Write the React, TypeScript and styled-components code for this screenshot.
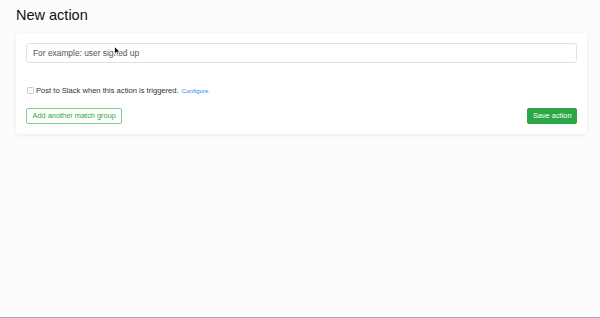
import styled, { createGlobalStyle } from "styled-components";

const GlobalStyle = createGlobalStyle`
  html, body {
    margin: 0;
    padding: 0;
    background: #fcfcfc;
  }
  body {
    font-family: "Liberation Sans", Arial, sans-serif;
    color: #222;
  }
`;

const Page = styled.div`
  position: relative;
  height: 317px;
  padding: 0 13px 0 16px;
  border-bottom: 1px solid #a8a8a8;
  background: #fcfcfc;
`;

const Title = styled.h1`
  margin: 0 0 9px;
  padding-top: 7px;
  font-size: 14.5px;
  line-height: 17px;
  font-weight: 400;
  color: #111;
`;

const Card = styled.div`
  width: 551px;
  padding: 10px;
  background: #fff;
  border-radius: 3px;
  box-shadow: 0 1px 4px rgba(0, 0, 0, 0.08);
`;

const Input = styled.input`
  display: block;
  box-sizing: border-box;
  width: 100%;
  height: 20px;
  padding: 0 6px;
  border: 1px solid #dfe3e8;
  border-radius: 3px;
  background: #fff;
  font-family: inherit;
  font-size: 8.4px;
  color: #333;
  outline: none;

  &::placeholder {
    color: #555;
  }
`;

const SlackRow = styled.label`
  display: flex;
  align-items: center;
  margin-top: 22px;
  height: 10px;
  padding-left: 1px;
  font-size: 7.6px;
  color: #333;
`;

const Box = styled.span`
  box-sizing: border-box;
  width: 7px;
  height: 7px;
  margin-right: 2px;
  border: 1px solid #c4c4c4;
  border-radius: 1.5px;
  background: #fff;
`;

const Link = styled.a`
  margin-left: 3px;
  font-size: 6.2px;
  color: #1d8cf8;
  text-decoration: none;
`;

const Actions = styled.div`
  display: flex;
  justify-content: space-between;
  margin-top: 13px;
`;

const Button = styled.button<{ $primary?: boolean }>`
  height: 16px;
  padding: 0 ${(p) => (p.$primary ? "4.5px" : "5.5px")};
  border: 1px solid ${(p) => (p.$primary ? "#2aa745" : "#80d092")};
  border-radius: 2px;
  background: ${(p) => (p.$primary ? "#2aa745" : "#fff")};
  color: ${(p) => (p.$primary ? "#fff" : "#2aa745")};
  font-family: inherit;
  font-size: 7.4px;
  line-height: 14px;
  cursor: pointer;
`;

const Cursor = styled.svg`
  position: absolute;
  left: 114px;
  top: 46px;
`;

export default function App() {
  return (
    <>
      <GlobalStyle />
      <Page>
        <Title>New action</Title>
        <Card>
          <Input placeholder="For example: user signed up" />
          <SlackRow>
            <Box />
            Post to Slack when this action is triggered.
            <Link href="#">Configure</Link>
          </SlackRow>
          <Actions>
            <Button>Add another match group</Button>
            <Button $primary>Save action</Button>
          </Actions>
        </Card>
        <Cursor width="7" height="10" viewBox="0 0 7 10">
          <path d="M0.5 0.5 L0.5 8 L2.4 6.3 L3.6 9 L4.8 8.5 L3.7 5.9 L6.2 5.9 Z" fill="#111" stroke="#fff" strokeWidth="0.8" />
        </Cursor>
      </Page>
    </>
  );
}
